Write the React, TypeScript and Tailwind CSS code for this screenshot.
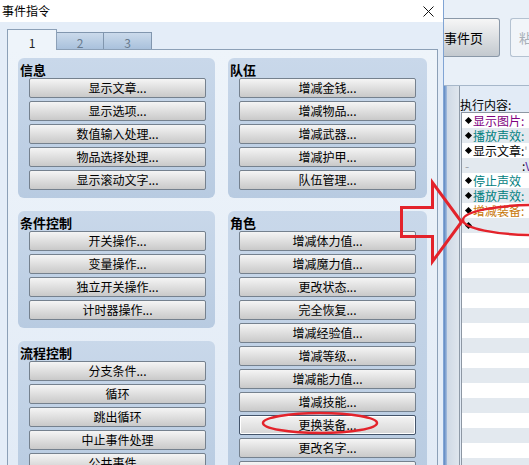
import React from 'react';

type Group = { title: string; items: string[] };

const leftGroups: Group[] = [
  { title: '信息', items: ['显示文章...', '显示选项...', '数值输入处理...', '物品选择处理...', '显示滚动文字...'] },
  { title: '条件控制', items: ['开关操作...', '变量操作...', '独立开关操作...', '计时器操作...'] },
  { title: '流程控制', items: ['分支条件...', '循环', '跳出循环', '中止事件处理', '公共事件...'] },
];

const rightGroups: Group[] = [
  { title: '队伍', items: ['增减金钱...', '增减物品...', '增减武器...', '增减护甲...', '队伍管理...'] },
  {
    title: '角色',
    items: [
      '增减体力值...',
      '增减魔力值...',
      '更改状态...',
      '完全恢复...',
      '增减经验值...',
      '增减等级...',
      '增减能力值...',
      '增减技能...',
      '更换装备...',
      '更改名字...',
      '更改职业...',
    ],
  },
];

// event list lines; anything past these is an empty row
const listRows = [
  { text: '显示图片:', color: 'text-[#800080]', bullet: true },
  { text: '播放声效:', color: 'text-[#008080]', bullet: true },
  { text: '显示文章:', color: 'text-black', bullet: true, tail: true },
  { text: '', color: 'text-black', bullet: false, cont: true },
  { text: '停止声效', color: 'text-[#008080]', bullet: true },
  { text: '播放声效:', color: 'text-[#008080]', bullet: true },
  { text: '增减装备:', color: 'text-[#c8780a]', bullet: true },
  { text: '', color: 'text-black', bullet: true },
];

function CommandButton({ label, focused }: { label: string; focused?: boolean }) {
  return (
    <div
      className={`h-[20px] w-[177px] shrink-0 rounded-[2px] border text-center text-[12px] leading-[18px] text-black ${
        focused
          ? 'border-[#44546a] bg-gradient-to-b from-[#f4f4f4] to-[#d6d6d6] shadow-[inset_0_0_0_1px_#ffffff]'
          : 'border-[#75818e] bg-gradient-to-b from-[#f5f5f5] to-[#c9c9c9]'
      }`}
    >
      {label}
    </div>
  );
}

function GroupBox({ group, width }: { group: Group; width: string }) {
  return (
    <div className={`${width} shrink-0 rounded-[6px] bg-gradient-to-b from-[#c9d8ea] to-[#b8cbe1] pb-[8px] pl-[11px]`}>
      <div className="-ml-[9px] h-[20px] text-[13px] font-bold leading-[23px] text-black">{group.title}</div>
      <div className="flex flex-col gap-[3px]">
        {group.items.map(item => (
          <CommandButton key={item} label={item} focused={item === '更换装备...'} />
        ))}
      </div>
    </div>
  );
}

function CommandDialog() {
  return (
    <div className="flex h-full w-[443px] shrink-0 flex-col">
      <div className="flex h-[22px] shrink-0 items-center justify-between bg-white pl-[2px] pr-[9px]">
        <span className="text-[12px] leading-[14px] text-black">事件指令</span>
        <svg width="11" height="11" viewBox="0 0 11 11">
          <path d="M0.5 0.5 L10.5 10.5 M10.5 0.5 L0.5 10.5" stroke="#111" strokeWidth="1" />
        </svg>
      </div>

      <div className="flex flex-1 flex-col overflow-hidden bg-[#e4edf8] pl-[7px] pt-[7px]">
        {/* tab strip */}
        <div className="flex h-[20px] shrink-0 items-end">
          <div className="relative z-10 -mb-px h-[21px] w-[50px] border border-b-0 border-[#8ca0b7] bg-[#eef4fa] pt-[6px] text-center text-[12px] leading-[14px] text-[#222]">
            1
          </div>
          <div className="h-[17px] w-[47px] border border-l-0 border-b-0 border-[#8196ae] bg-gradient-to-b from-[#cbdaeb] to-[#a9c1dc] pt-[3px] text-center text-[12px] leading-[14px] text-[#687a8e]">
            2
          </div>
          <div className="h-[17px] w-[48px] border border-l-0 border-b-0 border-[#8196ae] bg-gradient-to-b from-[#cbdaeb] to-[#a9c1dc] pt-[3px] text-center text-[12px] leading-[14px] text-[#687a8e]">
            3
          </div>
        </div>

        {/* tab page */}
        <div className="flex w-[431px] flex-1 gap-[13px] overflow-hidden border border-b-0 border-[#8ca0b7] bg-gradient-to-b from-[#eef4fa] to-[#e2ebf6] pl-[10px] pt-[8px]">
          <div className="flex flex-col gap-[13px]">
            {leftGroups.map(g => (
              <GroupBox key={g.title} group={g} width="w-[197px]" />
            ))}
          </div>
          <div className="flex flex-col gap-[13px]">
            {rightGroups.map(g => (
              <GroupBox key={g.title} group={g} width="w-[199px]" />
            ))}
          </div>
        </div>
      </div>
    </div>
  );
}

function EventPage() {
  const rows = Array.from({ length: 24 }, (_, i) => listRows[i]);
  return (
    <div className="flex h-full flex-1 flex-col overflow-hidden border-l border-[#80a4d4] bg-[#e2ebf6]">
      <div className="flex h-[86px] shrink-0 items-start border-b border-[#a6b7ca] bg-[#e9f0f8] pt-[18px]">
        <div className="flex h-[39px] w-[56px] shrink-0 items-center justify-end overflow-hidden rounded-r-[3px] border border-l-0 border-[#8a98a8] bg-gradient-to-b from-[#f6f6f6] to-[#c3c9cf] pr-[16px]">
          <span className="whitespace-nowrap text-[13px] text-black">新建事件页</span>
        </div>
        <div className="ml-[10px] flex h-[39px] w-[40px] shrink-0 items-center overflow-hidden rounded-l-[3px] border border-r-0 border-[#b4c2d1] bg-[#f1f5f9] pl-[8px]">
          <span className="whitespace-nowrap text-[13px] text-[#a8b0b8]">粘贴事件页</span>
        </div>
      </div>

      <div className="flex flex-1 overflow-hidden">
        <div className="w-[3px] shrink-0 bg-gradient-to-r from-[#5d88c2] to-[#a7bfdf]" />
        <div className="w-[13px] shrink-0 border-r border-[#8e9aa8] bg-gradient-to-r from-[#cfd9e5] to-[#dfe6ee]" />
        <div className="flex flex-1 flex-col overflow-hidden">
          <div className="h-[26px] shrink-0 whitespace-nowrap pt-[12px] text-[12px] leading-[14px] text-black">执行内容:</div>
          <div className="ml-[1px] flex-1 overflow-hidden border-l border-t border-[#8d97a3] bg-white">
            {rows.map((row, i) => (
              <div
                key={i}
                className={`flex h-[15px] items-center overflow-hidden whitespace-nowrap pl-[3px] text-[12px] leading-[15px] ${
                  i % 2 === 1 ? 'bg-[#e3e9ef]' : 'bg-white'
                }`}
              >
                {row?.bullet && <span className="mx-[1px] inline-block h-[5px] w-[5px] shrink-0 rotate-45 bg-black" />}
                {row?.cont && (
                  <>
                    <span className="w-[57px] shrink-0 text-[#9aa0a6]">-</span>
                    <span className="text-black">:</span>
                    <span className="text-[#5b2fa8]">V</span>
                  </>
                )}
                {row?.text && <span className={`ml-[1px] ${row.color}`}>{row.text}</span>}
                {row?.tail && <span className="text-[#b0b0b0]">'</span>}
              </div>
            ))}
          </div>
        </div>
      </div>
    </div>
  );
}

export default function App() {
  return (
    <div className="relative flex h-[465px] w-[529px] overflow-hidden bg-[#e4edf8] font-['Noto_Sans_CJK_SC','Noto_Sans',sans-serif]">
      <CommandDialog />
      <EventPage />

      {/* red markup drawn over the screen */}
      <svg className="pointer-events-none absolute left-0 top-0" width="529" height="465" viewBox="0 0 529 465">
        <polygon
          points="401.5,207.5 432.5,207.5 432.5,182.5 461.5,222 432.5,261.5 432.5,236.5 401.5,236.5"
          fill="none"
          stroke="#e3232b"
          strokeWidth="3"
          strokeLinejoin="miter"
        />
        <ellipse cx="536" cy="220" rx="73" ry="15" fill="none" stroke="#e3232b" strokeWidth="2.5" />
        <ellipse cx="320" cy="423" rx="57" ry="10" fill="none" stroke="#e3232b" strokeWidth="2.5" />
      </svg>
    </div>
  );
}
